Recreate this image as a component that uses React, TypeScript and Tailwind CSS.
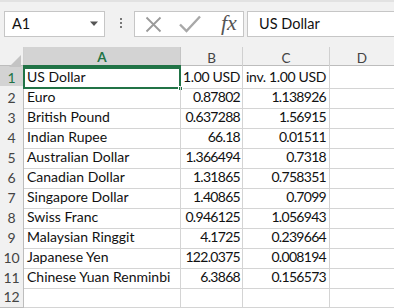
const rows: [string, string, string][] = [
  ['US Dollar', '1.00 USD', 'inv. 1.00 USD'],
  ['Euro', '0.87802', '1.138926'],
  ['British Pound', '0.637288', '1.56915'],
  ['Indian Rupee', '66.18', '0.01511'],
  ['Australian Dollar', '1.366494', '0.7318'],
  ['Canadian Dollar', '1.31865', '0.758351'],
  ['Singapore Dollar', '1.40865', '0.7099'],
  ['Swiss Franc', '0.946125', '1.056943'],
  ['Malaysian Ringgit', '4.1725', '0.239664'],
  ['Japanese Yen', '122.0375', '0.008194'],
  ['Chinese Yuan Renminbi', '6.3868', '0.156573'],
  ['', '', ''],
]

const cols = 'grid grid-cols-[24px_157px_62px_87px_1fr]'

// Calibri digits are narrow; tighten pure numbers so widths line up.
const isNum = (v: string) => /^[0-9.]+$/.test(v)

export default function App() {
  return (
    <div
      className="h-[308px] w-[394px] overflow-hidden bg-white text-[#111]"
      style={{ fontFamily: 'Lato, "Open Sans", sans-serif' }}
    >
      {/* Name box + formula bar */}
      <div className="flex h-[47px] items-start border-t-2 border-[#e2e2e2] bg-[#f1f1f1] pt-[9px]">
        <div className="ml-[4px] flex h-[26px] w-[101px] items-center justify-between border border-[#c6c6c6] bg-white pl-[7px] pr-[5px] text-[14.5px]">
          <span>A1</span>
          <svg width="10" height="6" viewBox="0 0 10 6">
            <path d="M1 0.5h8L5 5z" fill="#555" />
          </svg>
        </div>
        <div className="mt-[7px] ml-[14px] flex w-[4px] flex-col items-center gap-[2px]">
          <span className="h-[2px] w-[2px] bg-[#777]" />
          <span className="h-[2px] w-[2px] bg-[#777]" />
          <span className="h-[2px] w-[2px] bg-[#777]" />
        </div>
        <div className="ml-[11px] flex h-[26px] w-[110px] items-center border border-[#c6c6c6] bg-white">
          <svg className="ml-[10px]" width="17" height="17" viewBox="0 0 17 17">
            <path d="M1.5 1.5L15.5 15.5M15.5 1.5L1.5 15.5" stroke="#9a9a9a" strokeWidth="1.8" fill="none" />
          </svg>
          <svg className="ml-[17px]" width="22" height="18" viewBox="0 0 22 18">
            <path d="M1 9.5l6.5 6.5L21 1.5" stroke="#a8a8a8" strokeWidth="2.4" fill="none" />
          </svg>
          <span
            className="ml-[20px] mt-[-2px] text-[22px] italic leading-none text-[#555]"
            style={{ fontFamily: '"Liberation Serif", serif' }}
          >
            fx
          </span>
        </div>
        <div className="ml-[3px] flex h-[26px] flex-1 items-center border border-r-0 border-[#c6c6c6] bg-white pl-[11px] text-[14.5px]">
          US Dollar
        </div>
      </div>

      {/* Column headers */}
      <div className={`${cols} h-[19px] border-b border-[#bdbdbd] bg-[#f1f1f1] text-[13.5px] text-[#444]`}>
        <div className="relative border-r border-[#d0d0d0]">
          <svg className="absolute bottom-[2px] right-[2px]" width="12" height="12" viewBox="0 0 12 12">
            <path d="M12 0V12H0z" fill="#c4c4c4" />
          </svg>
        </div>
        <div className="flex items-center justify-center border-r border-[#c4c4c4] border-b-2 border-b-[#217346] bg-[#d3d3d3] font-bold text-[#217346]">
          A
        </div>
        <div className="flex items-center justify-center border-r border-[#d0d0d0]">B</div>
        <div className="flex items-center justify-center border-r border-[#d0d0d0]">C</div>
        <div className="flex items-center justify-center">D</div>
      </div>

      {/* Grid body */}
      <div className="text-[14px]">
        {rows.map((r, i) => {
          const selected = i === 0
          return (
            <div key={i} className={`${cols} h-[20px]`}>
              <div
                className={`flex items-center justify-center border-b border-r border-[#bdbdbd] text-[14px] ${
                  selected ? 'bg-[#d3d3d3] text-[#217346]' : 'bg-[#f1f1f1] text-[#444]'
                }`}
              >
                {i + 1}
              </div>
              <div className="relative flex items-end whitespace-nowrap border-b border-r border-[#d4d4d4] pb-[1px] pl-[3px]">
                {selected && (
                  <>
                    <div className="pointer-events-none absolute -top-px -left-px -right-px -bottom-px border-2 border-[#217346]" />
                    <div className="absolute -bottom-[3px] -right-[3px] h-[5px] w-[5px] border border-white bg-[#217346]" />
                  </>
                )}
                <span className="relative">{r[0]}</span>
              </div>
              <div
                className={`flex items-end justify-end whitespace-nowrap border-b border-r border-[#d4d4d4] pb-[1px] pr-[2px] ${
                  isNum(r[1]) ? 'tracking-[-0.7px]' : 'tracking-[-0.35px]'
                }`}
              >
                {r[1]}
              </div>
              <div
                className={`flex items-end justify-end whitespace-nowrap border-b border-r border-[#d4d4d4] pb-[1px] pr-[3px] ${
                  isNum(r[2]) ? 'tracking-[-0.7px]' : 'tracking-[-0.35px]'
                }`}
              >
                {r[2]}
              </div>
              <div className="border-b border-[#d4d4d4]" />
            </div>
          )
        })}
      </div>
    </div>
  )
}
